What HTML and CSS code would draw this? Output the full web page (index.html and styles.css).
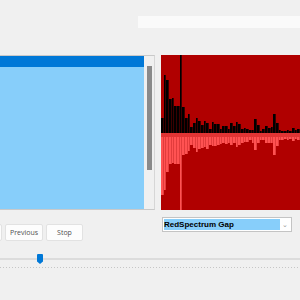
FILE: index.html
```html
<!DOCTYPE html>
<html lang="en">
<head>
  <meta charset="UTF-8">
  <title>Spectrum Player</title>
  <link rel="stylesheet" href="styles.css">
</head>
<body>
  <div class="topbar">
    <div class="search"></div>
  </div>
  <div class="main">
    <div class="list-wrap">
      <div class="list">
        <div class="list-row selected"></div>
      </div>
      <div class="scrollbar"><div class="scroll-thumb"></div></div>
    </div>
    <div class="spectrum">
      <div class="spectrum-top" id="spectrum-top"></div>
      <div class="spectrum-mid"></div>
      <div class="spectrum-bottom" id="spectrum-bottom"></div>
    </div>
  </div>
  <div class="controls">
    <div class="buttons">
      <button class="btn btn-cut"></button>
      <button class="btn btn-prev">Previous</button>
      <button class="btn btn-stop">Stop</button>
    </div>
    <div class="mode">
      <div class="select">
        <span class="select-value">RedSpectrum Gap</span>
        <span class="select-arrow">&#8964;</span>
      </div>
    </div>
  </div>
  <div class="slider">
    <div class="track"></div>
    <div class="knob"></div>
    <div class="ticks"></div>
  </div>
  <script>
    const topBars = [15,58,53,34,35,27,27,78,26,15,19,6,10,15,12,8,12,10,4,11,9,9,4,7,7,4,10,7,11,9,4,5,4,3,3,14,8,2,4,7,5,6,19,10,3,2,2,3,2,5,3,4];
    const bottomBars = [58,53,35,27,26,27,27,73,18,17,14,8,11,15,12,11,10,12,8,9,9,8,7,6,7,6,8,6,10,8,6,5,5,3,6,13,6,3,3,6,6,6,18,9,3,3,2,3,2,4,2,3];
    function fillBars(id, values)
    {
      const box = document.getElementById(id);
      values.forEach(v => {
        const bar = document.createElement("div");
        bar.className = "bar";
        bar.style.height = v + "px";
        box.appendChild(bar);
      });
    }
    fillBars("spectrum-top", topBars);
    fillBars("spectrum-bottom", bottomBars);
  </script>
</body>
</html>
```

FILE: styles.css
```css
body
{
  margin: 0;
  width: 300px;
  height: 300px;
  overflow: hidden;
  background: #f0f0f0;
  font-family: 'Liberation Sans', Arial, sans-serif;
}
.topbar
{
  height: 55px;
  padding-top: 16px;
  box-sizing: border-box;
}
.search
{
  margin-left: 138px;
  height: 12px;
  background: #fafafa;
}
.main
{
  display: flex;
  height: 155px;
}
.list-wrap
{
  display: flex;
  width: 156px;
  border-top: 1px solid #c9c9c9;
  border-right: 1px solid #d6d6d6;
  border-bottom: 1px solid #c9c9c9;
  box-sizing: border-box;
}
.list
{
  width: 144px;
  background: #87cefa;
}
.list-row.selected
{
  height: 11px;
  background: #0078d7;
}
.scrollbar
{
  flex: 1;
  background: #f0f0f0;
  padding: 10px 0 0 3px;
}
.scroll-thumb
{
  width: 5px;
  height: 104px;
  background: #8a8a8a;
}
.spectrum
{
  margin-left: 6px;
  width: 140px;
  display: flex;
  flex-direction: column;
  background: #b00000;
}
.spectrum-top
{
  height: 78px;
  display: flex;
  align-items: flex-end;
}
.spectrum-top .bar
{
  flex: 1;
  background: #000;
  border-right: 1px solid #3a0000;
}
.spectrum-mid
{
  height: 4px;
  background: #e03434;
}
.spectrum-bottom
{
  flex: 1;
  display: flex;
  align-items: flex-start;
}
.spectrum-bottom .bar
{
  flex: 1;
  background: #ff5252;
  border-right: 1px solid #e23c3c;
}
.controls
{
  display: flex;
  height: 40px;
}
.buttons
{
  width: 162px;
  display: flex;
  gap: 3px;
  padding-top: 14px;
  box-sizing: border-box;
}
.btn
{
  height: 17px;
  padding: 0;
  background: #fdfdfd;
  border: 1px solid #e2e2e2;
  border-radius: 2px;
  font-family: 'Open Sans', sans-serif;
  font-size: 7px;
  color: #505050;
}
.btn-cut
{
  width: 36px;
  margin-left: -34px;
}
.btn-prev
{
  width: 38px;
}
.btn-stop
{
  width: 37px;
}
.mode
{
  padding-top: 7px;
}
.select
{
  width: 130px;
  height: 15px;
  box-sizing: border-box;
  border: 1px solid #c4c4c4;
  background: #fff;
  padding: 1px;
  display: flex;
  align-items: center;
}
.select-value
{
  width: 116px;
  height: 11px;
  line-height: 11px;
  background: #87cefa;
  font-weight: bold;
  font-size: 8px;
  color: #000;
}
.select-arrow
{
  flex: 1;
  text-align: center;
  font-size: 7px;
  color: #999;
  line-height: 6px;
}
.slider
{
  position: relative;
  padding-top: 8px;
}
.track
{
  height: 2px;
  background: #dcdcdc;
}
.knob
{
  position: absolute;
  left: 37px;
  top: 4px;
  width: 6px;
  height: 10px;
  background: #0078d7;
  border-radius: 1px 1px 0 0;
  clip-path: polygon(0 0, 100% 0, 100% 75%, 50% 100%, 0 75%);
}
.ticks
{
  margin-top: 7px;
  height: 1px;
  background: repeating-linear-gradient(to right, #c6c6c6 0 1px, transparent 1px 3px);
}
```
